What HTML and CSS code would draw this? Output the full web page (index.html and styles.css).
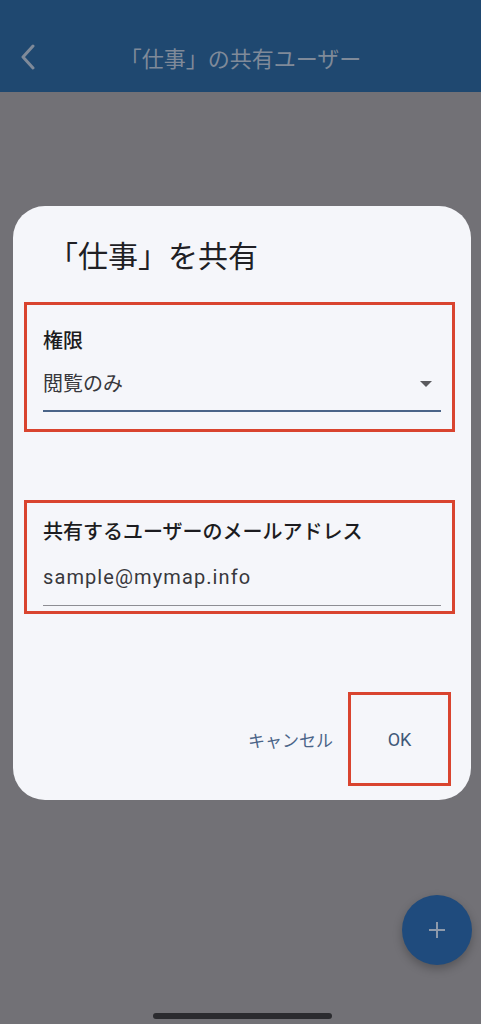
FILE: index.html
```html
<!DOCTYPE html>
<html lang="ja">
<head>
    <meta charset="UTF-8">
    <meta name="viewport" content="width=device-width, initial-scale=1.0">
    <title>「仕事」の共有ユーザー</title>
    <link rel="stylesheet" href="styles.css">
</head>
<body>
    <header class="app-bar">
        <span class="back-btn">
            <svg width="16" height="26" viewBox="0 0 16 26">
                <path d="M13 2 L3 13 L13 24" fill="none" stroke="currentColor" stroke-width="3" stroke-linecap="round" stroke-linejoin="round"/>
            </svg>
        </span>
        <h1 class="app-title">「仕事」の共有ユーザー</h1>
    </header>

    <main class="scrim">
        <div class="dialog">
            <h2 class="dialog-title">「仕事」を共有</h2>

            <div class="mark">
                <div class="field">
                    <label class="field-label">権限</label>
                    <div class="field-input select">
                        <span>閲覧のみ</span>
                        <span class="caret"></span>
                    </div>
                </div>
            </div>

            <div class="mark mark-email">
                <div class="field">
                    <label class="field-label">共有するユーザーのメールアドレス</label>
                    <div class="field-input text">
                        <span>sample@mymap.info</span>
                    </div>
                </div>
            </div>

            <div class="actions">
                <button type="button" class="text-btn">キャンセル</button>
                <div class="mark mark-ok">
                    <button type="button" class="text-btn ok">OK</button>
                </div>
            </div>
        </div>
    </main>

    <button type="button" class="fab">
        <svg width="20" height="20" viewBox="0 0 20 20">
            <path d="M10 2 V18 M2 10 H18" stroke="currentColor" stroke-width="2"/>
        </svg>
    </button>
    <div class="home-indicator"></div>
</body>
</html>
```

FILE: styles.css
```css
:root {
    --bar-color: #1f4870;
    --scrim-color: #727176;
    --dialog-bg: #f5f6fa;
    --mark-color: #d9442f;
    --accent: #4a6488;
    --text-color: #1c1c20;
}

* {
    margin: 0;
    padding: 0;
    box-sizing: border-box;
}

html, body {
    height: 100%;
}

body {
    font-family: Roboto, "Noto Sans CJK JP", sans-serif;
    color: var(--text-color);
    background-color: var(--scrim-color);
    display: flex;
    flex-direction: column;
    overflow: hidden;
}

.app-bar {
    height: 92px;
    background-color: var(--bar-color);
    display: flex;
    align-items: center;
    padding-top: 22px;
    color: #7f8a99;
}

.back-btn {
    display: flex;
    margin-left: 20px;
}

.app-title {
    flex: 1;
    text-align: center;
    font-size: 22px;
    font-weight: 400;
    margin-right: 36px;
}

.scrim {
    flex: 1;
    padding: 114px 10px 0 13px;
}

.dialog {
    background-color: var(--dialog-bg);
    border-radius: 32px;
    width: 458px;
    padding: 31px 16px 14px 11px;
}

.dialog-title {
    font-size: 30px;
    font-weight: 400;
    line-height: 40px;
    padding-left: 24px;
    margin-bottom: 25px;
    color: #202024;
}

.mark {
    border: 3px solid var(--mark-color);
}

.field {
    padding: 24px 11px 17px 16px;
}

.field-label {
    display: block;
    font-size: 20px;
    font-weight: 500;
    line-height: 24px;
    margin-bottom: 19px;
}

.field-input {
    display: flex;
    align-items: center;
    justify-content: space-between;
    font-size: 20px;
    line-height: 24px;
    color: #38383c;
    padding-bottom: 14px;
}

.select {
    border-bottom: 2px solid var(--accent);
}

.caret {
    width: 0;
    height: 0;
    border-left: 6px solid transparent;
    border-right: 6px solid transparent;
    border-top: 6px solid #5a5a5e;
    margin-right: 9px;
}

.mark-email {
    margin-top: 68px;
}

.mark-email .field {
    padding-top: 17px;
    padding-bottom: 5px;
}

.mark-email .field-label {
    margin-bottom: 21px;
}

.text {
    border-bottom: 1px solid #8d8d93;
    padding-bottom: 16px;
    letter-spacing: 1.1px;
}

.actions {
    display: flex;
    justify-content: flex-end;
    align-items: center;
    margin-top: 78px;
    gap: 15px;
    padding-right: 4px;
}

.text-btn {
    background: none;
    border: none;
    font-family: inherit;
    font-size: 17px;
    color: var(--accent);
    cursor: pointer;
}

.mark-ok {
    width: 103px;
    height: 94px;
    display: flex;
    align-items: center;
    justify-content: center;
}

.ok {
    font-size: 18px;
    color: #3f5878;
}

.fab {
    position: absolute;
    left: 402px;
    top: 895px;
    width: 70px;
    height: 70px;
    border-radius: 50%;
    border: none;
    background-color: #1f4b7d;
    color: #8e9aab;
    display: flex;
    align-items: center;
    justify-content: center;
    box-shadow: 0 4px 10px rgba(0, 0, 0, 0.25);
}

.home-indicator {
    position: absolute;
    left: 153px;
    top: 1013px;
    width: 179px;
    height: 6px;
    border-radius: 3px;
    background-color: #2b2b2f;
}
```
